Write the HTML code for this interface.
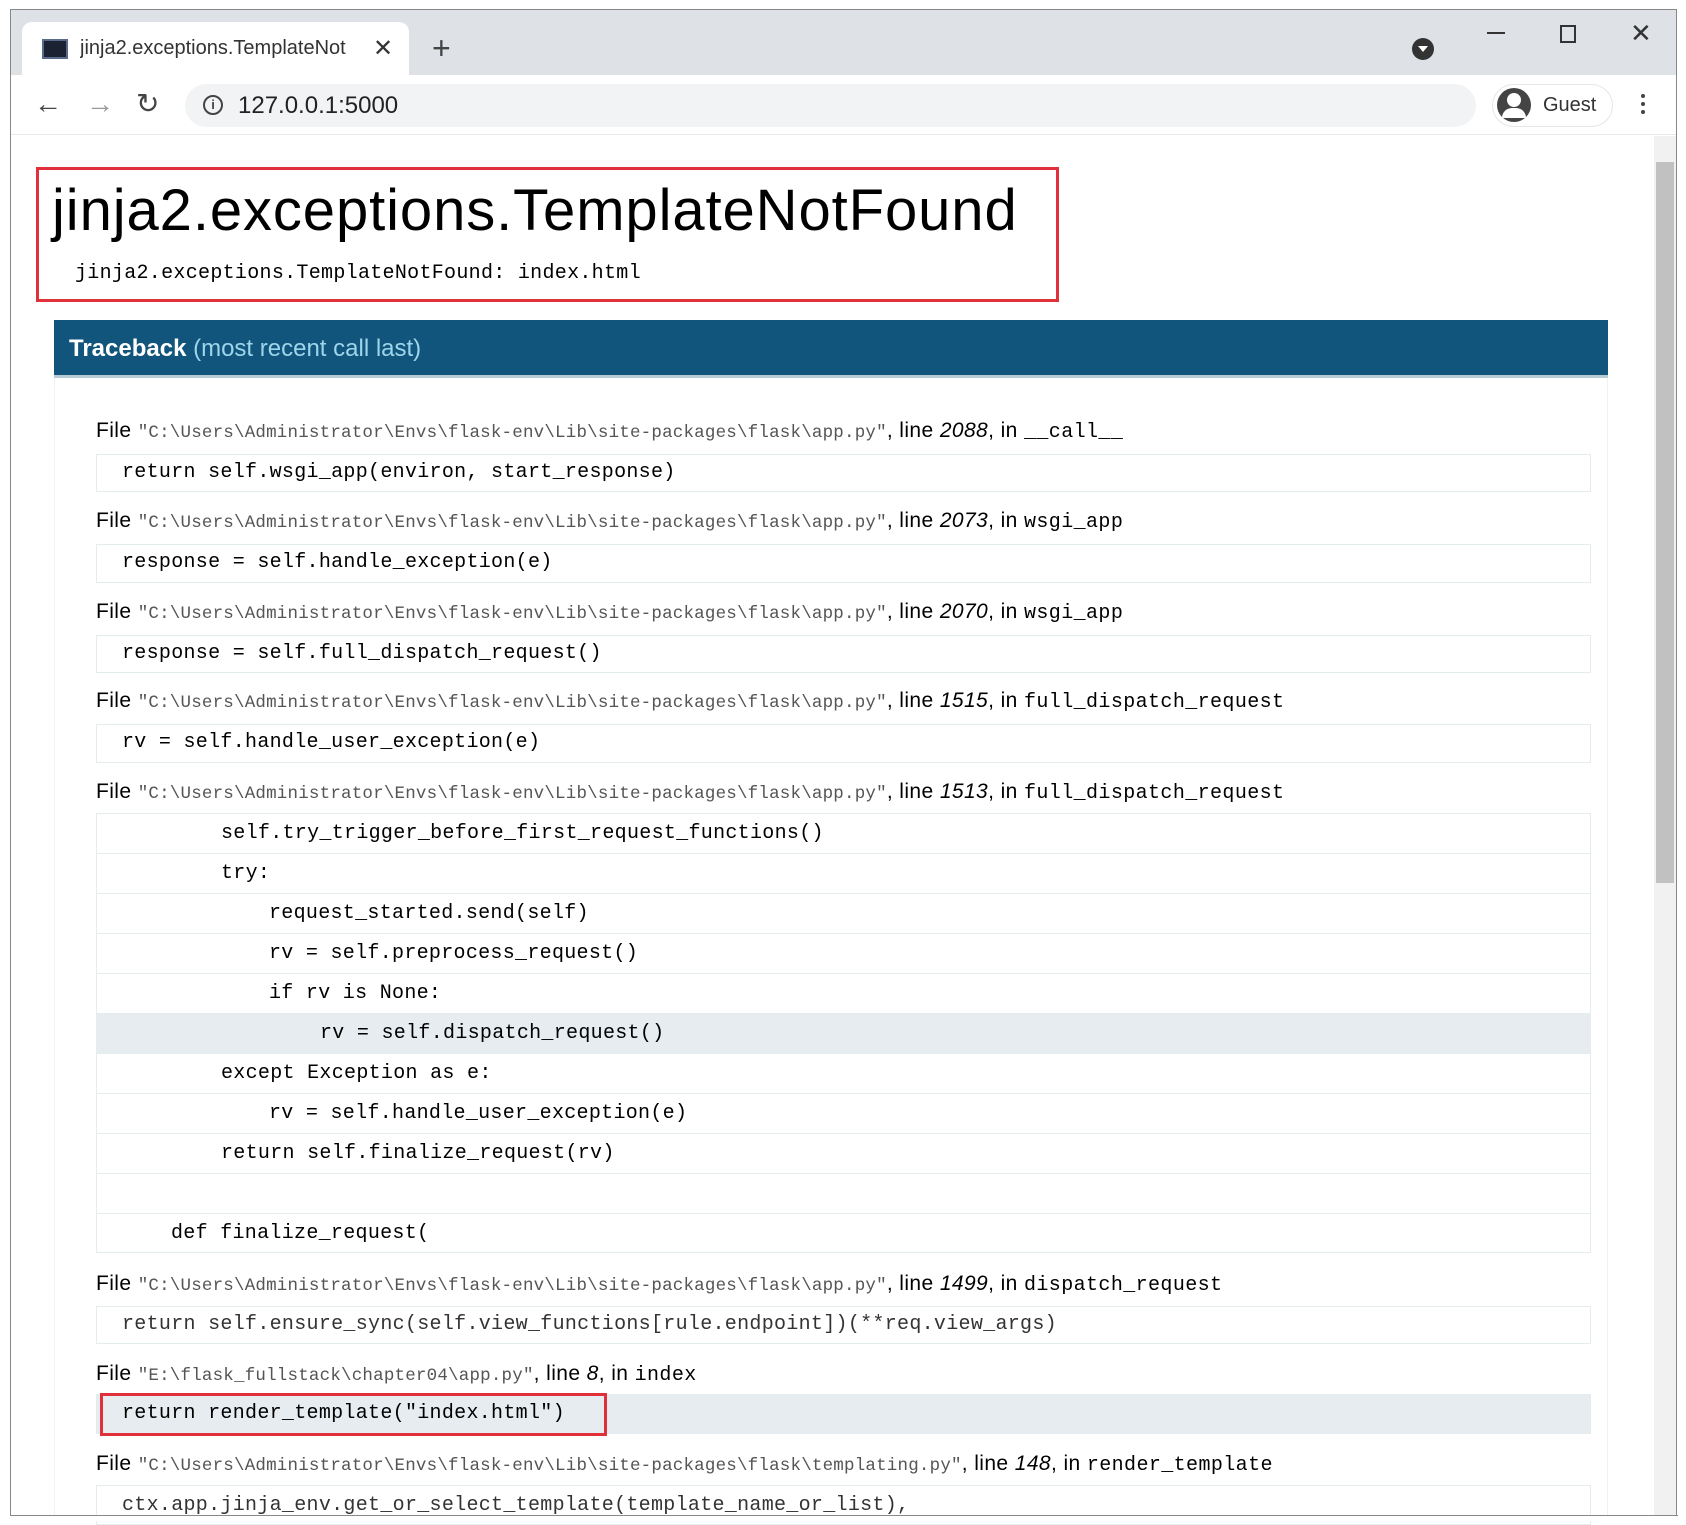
<!DOCTYPE html>
<html><head><meta charset="utf-8">
<style>
*{margin:0;padding:0;box-sizing:border-box}
html,body{width:1686px;height:1521px;background:#fff;overflow:hidden;font-family:"Liberation Sans",sans-serif}
.a{position:absolute}
.frame{left:10px;top:9px;width:1667px;height:1507px;border:1px solid #888;background:#fff}
.tabbar{left:11px;top:10px;width:1665px;height:65px;background:#dee1e6}
.tab{left:22px;top:22px;width:387px;height:53px;background:#fff;border-radius:10px 10px 0 0}
.toolbar{left:11px;top:75px;width:1665px;height:60px;background:#fff;border-bottom:1px solid #e8e8e8}
.url{left:185px;top:84px;width:1291px;height:43px;background:#f1f3f4;border-radius:22px}
.fl{font-size:21px;color:#000;white-space:nowrap;line-height:24px;letter-spacing:0.4px}
.fl .p{font-family:"Liberation Mono",monospace;font-size:17.5px;color:#555;letter-spacing:0.2px}
.fl i{font-style:italic}
.fl .m{font-family:"Liberation Mono",monospace;font-size:20px}
.cb{left:96px;width:1495px;border:1px solid #e4ecee;background:#fff}
.code{font-family:"Liberation Mono",monospace;font-size:20px;color:#000;white-space:pre;line-height:24px;letter-spacing:0.3px}
.row{left:96px;width:1495px;height:40px;border-top:1px solid #e4ecee}
</style></head><body>
<div class="a frame"></div>
<div class="a tabbar"></div>
<div class="a tab"></div>
<div class="a" style="left:42px;top:39px;width:26px;height:20px;background:#1b2333;border:2px solid #5a6a8a"></div>
<div class="a" style="left:80px;top:37px;font-size:20px;color:#333;white-space:nowrap;width:280px;overflow:hidden">jinja2.exceptions.TemplateNot</div>
<div class="a" style="left:373px;top:34px;font-size:24px;color:#333">✕</div>
<div class="a" style="left:432px;top:30px;font-size:32px;color:#444">+</div>
<div class="a" style="left:1412px;top:38px;width:22px;height:22px;border-radius:50%;background:#333"></div>
<div class="a" style="left:1418px;top:46px;width:0;height:0;border-left:5px solid transparent;border-right:5px solid transparent;border-top:6px solid #fff"></div>
<div class="a" style="left:1487px;top:32px;width:18px;height:2px;background:#333"></div>
<div class="a" style="left:1560px;top:25px;width:16px;height:18px;border:2px solid #333"></div>
<div class="a" style="left:1630px;top:18px;font-size:26px;color:#333">✕</div>
<div class="a toolbar"></div>
<div class="a" style="left:34px;top:88px;font-size:28px;color:#444">←</div>
<div class="a" style="left:86px;top:88px;font-size:28px;color:#999">→</div>
<div class="a" style="left:136px;top:87px;font-size:28px;color:#444">↻</div>
<div class="a url"></div>
<div class="a" style="left:203px;top:95px;width:20px;height:20px;border:2px solid #444;border-radius:50%;font-size:13px;text-align:center;line-height:16px;font-weight:bold;color:#444">i</div>
<div class="a" style="left:238px;top:92px;font-size:24px;color:#222">127.0.0.1:5000</div>
<div class="a" style="left:1492px;top:84px;width:121px;height:43px;border:1px solid #e6e6e6;border-radius:22px"></div>
<div class="a" style="left:1497px;top:88px;width:34px;height:34px;border-radius:50%;background:#444"></div>
<div class="a" style="left:1507px;top:93px;width:14px;height:14px;border-radius:50%;background:#fff"></div>
<div class="a" style="left:1502px;top:108px;width:24px;height:10px;border-radius:12px 12px 0 0;background:#fff"></div>
<div class="a" style="left:1543px;top:94px;font-size:20px;color:#333">Guest</div>
<div class="a" style="left:1641px;top:94px;width:4px;height:4px;background:#444;border-radius:2px;box-shadow:0 8px 0 #444,0 16px 0 #444"></div>
<div class="a" style="left:1654px;top:136px;width:22px;height:1379px;background:#f1f1f1"></div>
<div class="a" style="left:1656px;top:162px;width:18px;height:721px;background:#c1c1c1"></div>
<div class="a" style="left:36px;top:167px;width:1023px;height:135px;border:3px solid #e0303a"></div>
<div class="a" style="left:52px;top:177px;font-size:58px;color:#000;white-space:nowrap;letter-spacing:0.9px">jinja2.exceptions.TemplateNotFound</div>
<div class="a code" style="left:75px;top:262px;font-size:20px;letter-spacing:0.3px">jinja2.exceptions.TemplateNotFound: index.html</div>
<div class="a" style="left:54px;top:320px;width:1554px;height:58px;background:#11557c;border-bottom:3px solid #b8ccd6"></div>
<div class="a" style="left:69px;top:335px;font-size:24px;color:#fff;white-space:nowrap"><b>Traceback</b> <span style="color:#9fd5ea">(most recent call last)</span></div>
<div class="a" style="left:54px;top:378px;width:1554px;height:1140px;border-left:1px solid #eef2f3;border-right:1px solid #eef2f3"></div>

<div class="a fl" style="left:96px;top:419px">File <span class="p">"C:\Users\Administrator\Envs\flask-env\Lib\site-packages\flask\app.py"</span>, line <i>2088</i>, in <span class="m">__call__</span></div>
<div class="a cb" style="top:454px;height:38px"></div>
<div class="a code" style="left:122px;top:461px">return self.wsgi_app(environ, start_response)</div>

<div class="a fl" style="left:96px;top:509px">File <span class="p">"C:\Users\Administrator\Envs\flask-env\Lib\site-packages\flask\app.py"</span>, line <i>2073</i>, in <span class="m">wsgi_app</span></div>
<div class="a cb" style="top:544px;height:39px"></div>
<div class="a code" style="left:122px;top:551px">response = self.handle_exception(e)</div>

<div class="a fl" style="left:96px;top:600px">File <span class="p">"C:\Users\Administrator\Envs\flask-env\Lib\site-packages\flask\app.py"</span>, line <i>2070</i>, in <span class="m">wsgi_app</span></div>
<div class="a cb" style="top:635px;height:38px"></div>
<div class="a code" style="left:122px;top:642px">response = self.full_dispatch_request()</div>

<div class="a fl" style="left:96px;top:689px">File <span class="p">"C:\Users\Administrator\Envs\flask-env\Lib\site-packages\flask\app.py"</span>, line <i>1515</i>, in <span class="m">full_dispatch_request</span></div>
<div class="a cb" style="top:724px;height:39px"></div>
<div class="a code" style="left:122px;top:731px">rv = self.handle_user_exception(e)</div>

<div class="a fl" style="left:96px;top:780px">File <span class="p">"C:\Users\Administrator\Envs\flask-env\Lib\site-packages\flask\app.py"</span>, line <i>1513</i>, in <span class="m">full_dispatch_request</span></div>
<div class="a cb" style="top:813px;height:440px"></div>
<div class="a row" style="top:853px"></div>
<div class="a row" style="top:893px"></div>
<div class="a row" style="top:933px"></div>
<div class="a row" style="top:973px"></div>
<div class="a row" style="top:1013px;background:#e6ecef"></div>
<div class="a row" style="top:1053px"></div>
<div class="a row" style="top:1093px"></div>
<div class="a row" style="top:1133px"></div>
<div class="a row" style="top:1173px"></div>
<div class="a row" style="top:1213px"></div>
<div class="a code" style="left:221px;top:822px">self.try_trigger_before_first_request_functions()</div>
<div class="a code" style="left:221px;top:862px">try:</div>
<div class="a code" style="left:269px;top:902px">request_started.send(self)</div>
<div class="a code" style="left:269px;top:942px">rv = self.preprocess_request()</div>
<div class="a code" style="left:269px;top:982px">if rv is None:</div>
<div class="a code" style="left:320px;top:1022px">rv = self.dispatch_request()</div>
<div class="a code" style="left:221px;top:1062px">except Exception as e:</div>
<div class="a code" style="left:269px;top:1102px">rv = self.handle_user_exception(e)</div>
<div class="a code" style="left:221px;top:1142px">return self.finalize_request(rv)</div>
<div class="a code" style="left:171px;top:1222px">def finalize_request(</div>

<div class="a fl" style="left:96px;top:1272px">File <span class="p">"C:\Users\Administrator\Envs\flask-env\Lib\site-packages\flask\app.py"</span>, line <i>1499</i>, in <span class="m">dispatch_request</span></div>
<div class="a cb" style="top:1306px;height:38px"></div>
<div class="a code" style="left:122px;top:1313px;color:#333">return self.ensure_sync(self.view_functions[rule.endpoint])(**req.view_args)</div>

<div class="a fl" style="left:96px;top:1362px">File <span class="p">"E:\flask_fullstack\chapter04\app.py"</span>, line <i>8</i>, in <span class="m">index</span></div>
<div class="a cb" style="top:1394px;height:40px;background:#e6ecef"></div>
<div class="a" style="left:100px;top:1393px;width:507px;height:43px;border:3px solid #e0303a"></div>
<div class="a code" style="left:122px;top:1402px">return render_template("index.html")</div>

<div class="a fl" style="left:96px;top:1452px">File <span class="p">"C:\Users\Administrator\Envs\flask-env\Lib\site-packages\flask\templating.py"</span>, line <i>148</i>, in <span class="m">render_template</span></div>
<div class="a cb" style="top:1485px;height:40px"></div>
<div class="a code" style="left:122px;top:1494px;color:#333">ctx.app.jinja_env.get_or_select_template(template_name_or_list),</div>
<div class="a" style="left:0;top:1516px;width:1686px;height:5px;background:#fff"></div>
<div class="a" style="left:10px;top:1515px;width:1668px;height:1px;background:#888"></div>
</body></html>
